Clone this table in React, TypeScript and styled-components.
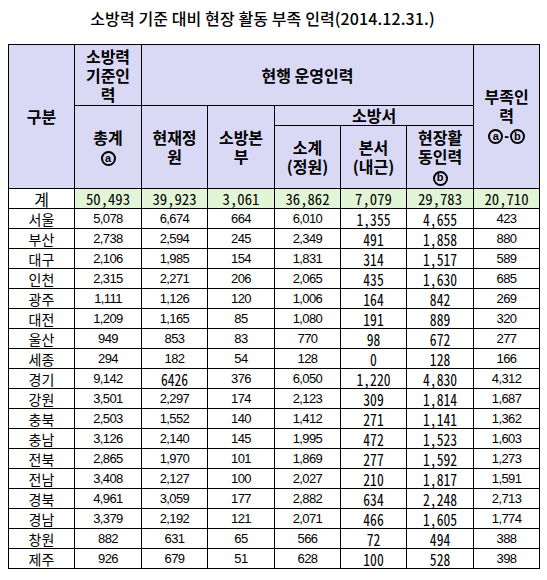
import React from 'react';
import styled, { createGlobalStyle } from 'styled-components';

const Global = createGlobalStyle`
  html, body { margin: 0; padding: 0; background: #fff; }
  body { font-family: "Noto Sans CJK KR", "Noto Sans", sans-serif; color: #000; }
`;

const Page = styled.div`
  width: 547px;
  box-sizing: border-box;
  padding-left: 8px;
  display: flex;
  flex-direction: column;
`;

const Title = styled.h1`
  flex: none;
  margin: 0;
  height: 44px;
  box-sizing: border-box;
  padding: 6px 30px 0 0;
  text-align: center;
  font-family: "Noto Sans CJK KR", sans-serif;
  font-size: 16px;
  line-height: 24px;
  font-weight: 500;
  letter-spacing: 0.1px;
`;

const Table = styled.table`
  flex: none;
  border-collapse: collapse;
  table-layout: fixed;
  width: 532px;
  border: 1px solid #000;
`;

const Row = styled.tr<{ $h: number }>`
  height: ${(p) => p.$h}px;
`;

const Head = styled.th`
  background: #d9d9f5;
  border: 1px solid #000;
  padding: 0;
  text-align: center;
  vertical-align: middle;
  font-family: "Noto Sans CJK KR", sans-serif;
  font-weight: 700;
  font-size: 16px;
  line-height: 19px;
  letter-spacing: 0;
  overflow: hidden;
`;

const Circled = styled.span`
  display: inline-flex;
  align-items: center;
  justify-content: center;
  box-sizing: border-box;
  width: 15px;
  height: 15px;
  border: 2px solid #000;
  border-radius: 50%;
  font-family: "Liberation Sans", Arial, sans-serif;
  font-size: 11px;
  font-weight: 700;
  line-height: 1;
  vertical-align: middle;
  padding-bottom: 1px;
`;

const Dash = styled.span`
  font-family: "Liberation Sans", Arial, sans-serif;
  font-size: 14px;
  font-weight: 700;
  vertical-align: middle;
  margin: 0 1px;
`;

const Cell = styled.td<{ $total?: boolean }>`
  background: ${(p) => (p.$total ? '#e2f5d7' : '#fff')};
  border: 1px solid #000;
  padding: 0;
  height: 19px;
  text-align: center;
  vertical-align: middle;
  font-size: 13px;
  line-height: 18px;
`;

const Region = styled.span<{ $big?: boolean }>`
  display: block;
  text-align: center;
  font-family: "Noto Sans CJK KR", sans-serif;
  font-size: ${(p) => (p.$big ? 16 : 14)}px;
  line-height: 18px;
  font-weight: 400;
`;

const SmallNum = styled.span`
  display: block;
  text-align: center;
  font-family: "Liberation Sans", Arial, sans-serif;
  font-size: 13px;
  line-height: 18px;
  letter-spacing: -0.6px;
`;

const MonoNum = styled.span<{ $size: number; $sx: number }>`
  display: block;
  text-align: center;
  font-family: "Noto Sans Mono CJK KR", "DejaVu Sans Mono", monospace;
  font-size: ${(p) => p.$size}px;
  line-height: 18px;
  font-weight: 400;
  transform: scaleX(${(p) => p.$sx});
`;

type Data = [string, string, string, string, string, string, string, string];

const total: Data = ['계', '50,493', '39,923', '3,061', '36,862', '7,079', '29,783', '20,710'];

const rows: Data[] = [
  ['서울', '5,078', '6,674', '664', '6,010', '1,355', '4,655', '423'],
  ['부산', '2,738', '2,594', '245', '2,349', '491', '1,858', '880'],
  ['대구', '2,106', '1,985', '154', '1,831', '314', '1,517', '589'],
  ['인천', '2,315', '2,271', '206', '2,065', '435', '1,630', '685'],
  ['광주', '1,111', '1,126', '120', '1,006', '164', '842', '269'],
  ['대전', '1,209', '1,165', '85', '1,080', '191', '889', '320'],
  ['울산', '949', '853', '83', '770', '98', '672', '277'],
  ['세종', '294', '182', '54', '128', '0', '128', '166'],
  ['경기', '9,142', '6426', '376', '6,050', '1,220', '4,830', '4,312'],
  ['강원', '3,501', '2,297', '174', '2,123', '309', '1,814', '1,687'],
  ['충북', '2,503', '1,552', '140', '1,412', '271', '1,141', '1,362'],
  ['충남', '3,126', '2,140', '145', '1,995', '472', '1,523', '1,603'],
  ['전북', '2,865', '1,970', '101', '1,869', '277', '1,592', '1,273'],
  ['전남', '3,408', '2,127', '100', '2,027', '210', '1,817', '1,591'],
  ['경북', '4,961', '3,059', '177', '2,882', '634', '2,248', '2,713'],
  ['경남', '3,379', '2,192', '121', '2,071', '466', '1,605', '1,774'],
  ['창원', '882', '631', '65', '566', '72', '494', '388'],
  ['제주', '926', '679', '51', '628', '100', '528', '398'],
];

const widths = [66, 67, 66, 67, 66, 66, 67, 66];

function Value({ v, col }: { v: string; col: number }) {
  const big = col === 5 || col === 6 || v === '6426';
  if (big) {
    return (
      <MonoNum $size={17} $sx={0.8}>
        {v}
      </MonoNum>
    );
  }
  return <SmallNum>{v}</SmallNum>;
}

export default function App() {
  return (
    <>
      <Global />
      <Page>
        <Title>소방력 기준 대비 현장 활동 부족 인력(2014.12.31.)</Title>
        <Table>
          <colgroup>
            {widths.map((w, i) => (
              <col key={i} style={{ width: w }} />
            ))}
          </colgroup>
          <thead>
            <Row $h={61}>
              <Head rowSpan={3}>구분</Head>
              <Head>
                소방력
                <br />
                기준인
                <br />력
              </Head>
              <Head colSpan={5}>현행 운영인력</Head>
              <Head rowSpan={3}>
                부족인
                <br />력<br />
                <Circled>a</Circled>
                <Dash>-</Dash>
                <Circled>b</Circled>
              </Head>
            </Row>
            <Row $h={20}>
              <Head rowSpan={2}>
                총계
                <br />
                <Circled>a</Circled>
              </Head>
              <Head rowSpan={2}>
                현재정
                <br />원
              </Head>
              <Head rowSpan={2}>
                소방본
                <br />부
              </Head>
              <Head colSpan={3}>소방서</Head>
            </Row>
            <Row $h={63}>
              <Head>
                소계
                <br />
                (정원)
              </Head>
              <Head>
                본서
                <br />
                (내근)
              </Head>
              <Head>
                현장활
                <br />
                동인력
                <br />
                <Circled>b</Circled>
              </Head>
            </Row>
          </thead>
          <tbody>
            <Row $h={20}>
              <Cell>
                <Region $big>{total[0]}</Region>
              </Cell>
              {total.slice(1).map((v, i) => (
                <Cell key={i} $total>
                  <MonoNum $size={15} $sx={0.98}>
                    {v}
                  </MonoNum>
                </Cell>
              ))}
            </Row>
            {rows.map((r) => (
              <Row $h={20} key={r[0]}>
                <Cell>
                  <Region>{r[0]}</Region>
                </Cell>
                {r.slice(1).map((v, i) => (
                  <Cell key={i}>
                    <Value v={v} col={i + 1} />
                  </Cell>
                ))}
              </Row>
            ))}
          </tbody>
        </Table>
      </Page>
    </>
  );
}
